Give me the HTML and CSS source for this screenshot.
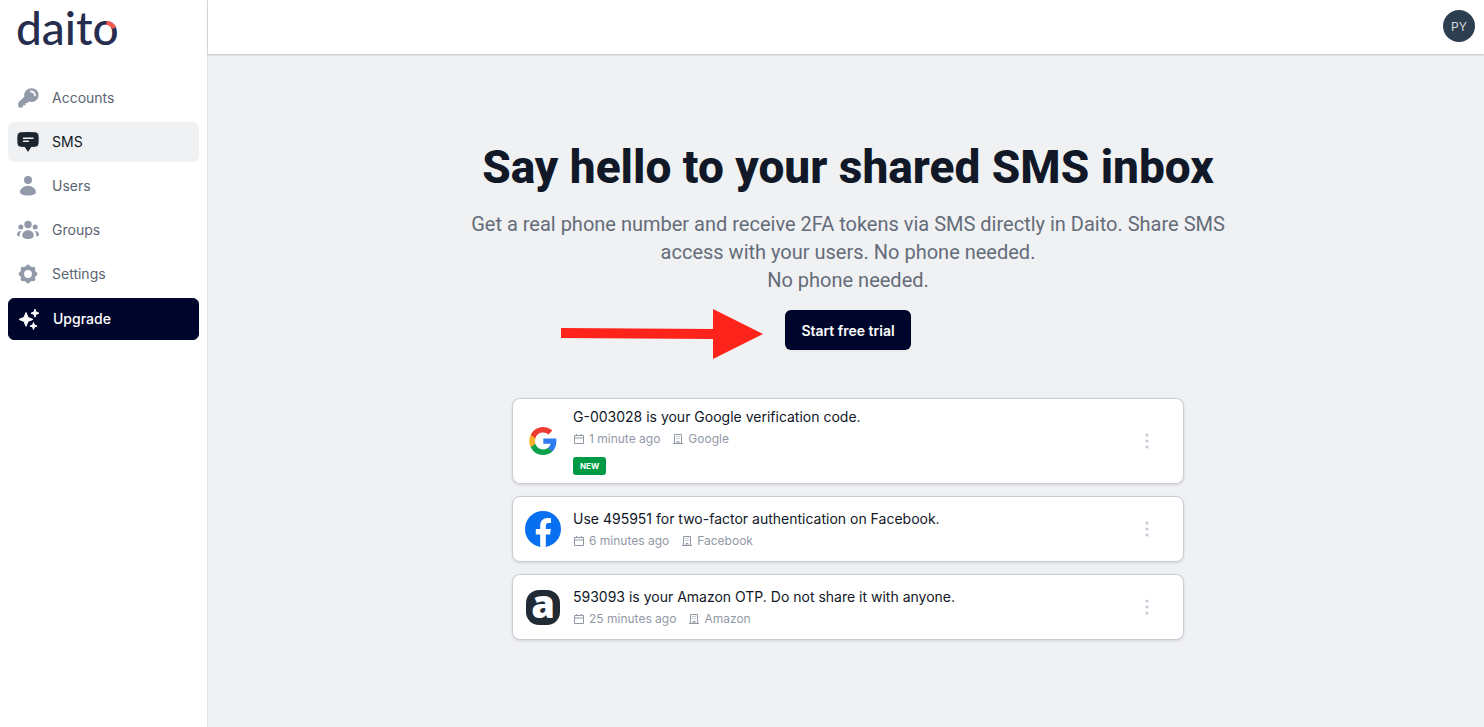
FILE: index.html
```html
<!DOCTYPE html>
<html lang="en">
<head>
    <meta charset="UTF-8">
    <meta name="viewport" content="width=device-width, initial-scale=1.0">
    <title>Daito - SMS</title>
    <link rel="stylesheet" href="styles.css">
</head>
<body>
    <aside class="sidebar">
        <a class="logo" href="#" aria-label="daito">
            <svg width="120" height="56" viewBox="0 0 120 56">
                <text class="logo-text" x="0" y="45">daito</text>
                <path d="M90.500 23a10 10 0 0 1 8 5" fill="none" stroke="#ff5a4f" stroke-width="4"/>
            </svg>
        </a>

        <nav class="nav">
            <a class="nav-item" href="#">
                <svg class="nav-icon" viewBox="0 0 24 24">
                    <path fill="currentColor" d="M15 2.300a6.900 6.900 0 0 0-6.700 8.500L2.900 16a1.600 1.600 0 0 0-.6 1.200v3.600c0 .5.300.800.800.800h3.100c.5 0 .8-.3.800-.8v-1.600h1.800c.5 0 .8-.3.800-.8v-1.500h1.700l2-1.300A6.900 6.900 0 1 0 15 2.300z"/>
                    <path fill="none" stroke="#fff" stroke-width="1.800" stroke-linecap="round" d="M15 5.500a3.900 3.900 0 0 1 3.900 3.900"/>
                </svg>
                Accounts
            </a>
            <a class="nav-item active" href="#">
                <svg class="nav-icon" viewBox="0 0 24 24">
                    <path fill="currentColor" d="M4.500 2.300Q12 1.700 19.500 2.300a3.400 3.400 0 0 1 3 3Q23 9.500 22.500 13.700a3.400 3.400 0 0 1-3 3l-4.300.3-3.200 5-3.200-5-4.300-.3a3.400 3.400 0 0 1-3-3Q1 9.500 1.500 5.300a3.400 3.400 0 0 1 3-3z"/>
                    <path fill="none" stroke="#f0f1f3" stroke-width="1.400" stroke-linecap="round" d="M7.500 8.200h9.500M7.500 11.200h5"/>
                </svg>
                SMS
            </a>
            <a class="nav-item" href="#">
                <svg class="nav-icon" viewBox="0 0 24 24" fill="currentColor">
                    <circle cx="12" cy="6" r="4"/>
                    <path d="M12 11.800c4.300 0 8 3.200 8 6.400 0 1.600-3.200 3.300-8 3.300s-8-1.700-8-3.300c0-3.200 3.700-6.400 8-6.400z"/>
                </svg>
                Users
            </a>
            <a class="nav-item" href="#">
                <svg class="nav-icon" viewBox="0 0 24 24" fill="currentColor">
                    <circle cx="12" cy="6.500" r="3.700"/>
                    <circle cx="4.800" cy="9" r="2.500"/>
                    <circle cx="19.200" cy="9" r="2.500"/>
                    <path d="M12 12.200c3.600 0 5.800 2.700 5.800 5.200 0 2-2.500 3.600-5.800 3.600s-5.800-1.600-5.800-3.600c0-2.500 2.200-5.200 5.800-5.200z"/>
                    <path d="M5.400 13c-1.500 1.500-2 3.500-1.600 5.500C2.300 18.500.900 17.600.900 16.500.900 14.600 3 12.800 5.400 13zM18.600 13c1.500 1.500 2 3.500 1.600 5.500 1.500 0 2.900-.9 2.900-2 0-1.900-2.100-3.700-4.500-3.500z"/>
                </svg>
                Groups
            </a>
            <a class="nav-item" href="#">
                <svg class="nav-icon" viewBox="0 0 24 24">
                    <g fill="currentColor">
                        <circle cx="12" cy="12" r="8"/>
                        <circle cx="12" cy="4.500" r="2"/>
                        <circle cx="17.300" cy="6.700" r="2"/>
                        <circle cx="19.500" cy="12" r="2"/>
                        <circle cx="17.300" cy="17.300" r="2"/>
                        <circle cx="12" cy="19.500" r="2"/>
                        <circle cx="6.700" cy="17.300" r="2"/>
                        <circle cx="4.500" cy="12" r="2"/>
                        <circle cx="6.700" cy="6.700" r="2"/>
                    </g>
                    <circle cx="12" cy="12" r="3.900" fill="#fff"/>
                </svg>
                Settings
            </a>
            <a class="nav-item upgrade" href="#">
                <svg class="nav-icon" viewBox="0 0 24 24" fill="currentColor" stroke="currentColor" stroke-linejoin="round">
                    <path d="M9 5.500l2 4.900 4.900 2-4.900 2-2 4.900-2-4.900-4.900-2 4.900-2z"/>
                    <path d="M18 2.200l1.100 2.900L22 6.200l-2.900 1.100L18 10.200l-1.100-2.900L14 6.200l2.900-1.100z"/>
                    <path d="M16.500 15.500l.9 2.600 2.600.9-2.600.9-.9 2.600-.9-2.600-2.600-.9 2.600-.9z"/>
                </svg>
                Upgrade
            </a>
        </nav>
    </aside>

    <div class="page">
        <header class="topbar">
            <button class="avatar" type="button" aria-label="Account menu">PY</button>
        </header>

        <main class="content">
            <h1>Say hello to your shared SMS inbox</h1>
            <p class="lead">Get a real phone number and receive 2FA tokens via SMS directly in Daito. Share SMS access with your users. No phone needed.<br>No phone needed.</p>

            <div class="cta">
                <svg class="arrow" width="202" height="50" viewBox="0 0 202 50">
                    <path fill="#ff241b" d="M0 19l152 1V0l50 25-50 25V30L0 29z"/>
                </svg>
                <button class="btn" type="button">Start free trial</button>
            </div>

            <ul class="messages">
                <li class="message">
                    <svg class="brand" viewBox="0 0 36 36" aria-hidden="true">
                        <g transform="translate(4 4) scale(.5833)">
                            <path fill="#2f7cf0" d="M47 24.500c0-1.600-.1-3.100-.4-4.600H24.500v9h12.700a11 11 0 0 1-4.700 7.100v6h7.600c4.400-4.100 6.900-10.100 6.900-17.500z"/>
                            <path fill="#0fa04b" d="M24.500 48c6.200 0 11.600-2.100 15.500-5.900l-7.600-6a14.300 14.300 0 0 1-21.500-7.500H3v6.200A23.500 23.500 0 0 0 24.500 48z"/>
                            <path fill="#fbb02d" d="M10.900 28.600a14.200 14.200 0 0 1 0-9.100v-6.200H3a23.800 23.800 0 0 0 0 21.400z"/>
                            <path fill="#ee3a33" d="M24.500 9.500c3.400 0 6.500 1.200 8.900 3.500l6.700-6.800A23.500 23.500 0 0 0 3 13.300l7.900 6.200a14.300 14.300 0 0 1 13.600-10z"/>
                        </g>
                    </svg>
                    <div class="message-body">
                        <p class="message-text">G-003028 is your Google verification code.</p>
                        <div class="meta">
                            <svg class="meta-icon" viewBox="0 0 12 12"><path d="M1.500 2.500h9v8h-9zM1.500 5h9M3.500 1v1.500M8.500 1v1.500"/></svg>
                            <span>1 minute ago</span>
                            <svg class="meta-icon sender" viewBox="0 0 12 12"><path d="M2.500 10.500v-9h7v9M1 10.500h10M5 10.500v-2h2v2M4.500 3.500h1M6.500 3.500h1M4.500 5.500h1M6.500 5.500h1"/></svg>
                            <span>Google</span>
                        </div>
                        <span class="badge">NEW</span>
                    </div>
                    <button class="more" type="button" aria-label="More">
                        <svg width="24" height="24" viewBox="0 0 24 24" fill="currentColor"><circle cx="12" cy="6" r="1.600"/><circle cx="12" cy="12" r="1.600"/><circle cx="12" cy="18" r="1.600"/></svg>
                    </button>
                </li>
                <li class="message">
                    <svg class="brand" viewBox="0 0 36 36" aria-hidden="true">
                        <circle cx="18" cy="18" r="18" fill="#0670f0"/>
                        <path fill="#fff" d="M15.200 35.800V23.500h-4.400v-5.600h4.400v-2.600c0-5.500 2.600-8.400 7.700-8.400 1.200 0 2.300.1 3.100.3v4.900h-2.500c-2 0-2.700 1.100-2.700 3.100v2.700h5.100l-.9 5.600h-4.200v12.300a18 18 0 0 1-5.600 0z"/>
                    </svg>
                    <div class="message-body">
                        <p class="message-text">Use 495951 for two-factor authentication on Facebook.</p>
                        <div class="meta">
                            <svg class="meta-icon" viewBox="0 0 12 12"><path d="M1.500 2.500h9v8h-9zM1.500 5h9M3.500 1v1.500M8.500 1v1.500"/></svg>
                            <span>6 minutes ago</span>
                            <svg class="meta-icon sender" viewBox="0 0 12 12"><path d="M2.500 10.500v-9h7v9M1 10.500h10M5 10.500v-2h2v2M4.500 3.500h1M6.500 3.500h1M4.500 5.500h1M6.500 5.500h1"/></svg>
                            <span>Facebook</span>
                        </div>
                    </div>
                    <button class="more" type="button" aria-label="More">
                        <svg width="24" height="24" viewBox="0 0 24 24" fill="currentColor"><circle cx="12" cy="6" r="1.600"/><circle cx="12" cy="12" r="1.600"/><circle cx="12" cy="18" r="1.600"/></svg>
                    </button>
                </li>
                <li class="message">
                    <svg class="brand" viewBox="0 0 36 36" aria-hidden="true">
                        <rect x="1" y="1" width="34" height="35" rx="13" fill="#212b36"/>
                        <text class="brand-letter" x="18" y="29" text-anchor="middle">a</text>
                    </svg>
                    <div class="message-body">
                        <p class="message-text">593093 is your Amazon OTP. Do not share it with anyone.</p>
                        <div class="meta">
                            <svg class="meta-icon" viewBox="0 0 12 12"><path d="M1.500 2.500h9v8h-9zM1.500 5h9M3.500 1v1.500M8.500 1v1.500"/></svg>
                            <span>25 minutes ago</span>
                            <svg class="meta-icon sender" viewBox="0 0 12 12"><path d="M2.500 10.500v-9h7v9M1 10.500h10M5 10.500v-2h2v2M4.500 3.500h1M6.500 3.500h1M4.500 5.500h1M6.500 5.500h1"/></svg>
                            <span>Amazon</span>
                        </div>
                    </div>
                    <button class="more" type="button" aria-label="More">
                        <svg width="24" height="24" viewBox="0 0 24 24" fill="currentColor"><circle cx="12" cy="6" r="1.600"/><circle cx="12" cy="12" r="1.600"/><circle cx="12" cy="18" r="1.600"/></svg>
                    </button>
                </li>
            </ul>
        </main>
    </div>
</body>
</html>
```
FILE: styles.css
```css
* {
    box-sizing: border-box;
}
body {
    display: flex;
    min-height: 100vh;
    margin: 0;
    font-family: Inter, sans-serif;
    font-size: 14px;
    line-height: 20px;
    color: #111827;
    background: #f0f1f3;
}
h1, p, ul {
    margin: 0;
    padding: 0;
}
button {
    font-family: inherit;
    border: 0;
    cursor: pointer;
}
svg {
    display: block;
    flex-shrink: 0;
    overflow: visible;
}

/* Sidebar */
.sidebar {
    flex: 0 0 208px;
    padding: 0 8px;
    background: #fff;
    border-right: 1px solid #dfe1e4;
}
.logo {
    display: block;
    padding-left: 8px;
    margin-bottom: 22px;
}
.logo-text {
    font-family: Lato, sans-serif;
    font-size: 46px;
    font-weight: 500;
    fill: #272d4e;
}
.nav {
    display: flex;
    flex-direction: column;
    gap: 4px;
}
.nav-item {
    display: flex;
    align-items: center;
    gap: 12px;
    padding: 8px;
    border-radius: 6px;
    color: #5b6472;
    line-height: 24px;
    text-decoration: none;
}
.nav-icon {
    width: 24px;
    height: 24px;
    color: #929aa9;
}
.active {
    color: #111827;
    background: #f0f1f3;
}
.active .nav-icon {
    color: #1c252e;
}
.upgrade {
    border: 1px solid #00062b;
    color: #fff;
    background: #00062b;
    font-weight: 500;
}
.upgrade .nav-icon {
    color: #fff;
}

/* Main column */
.page {
    flex: 1;
    min-width: 0;
}
.topbar {
    display: flex;
    justify-content: flex-end;
    padding: 10px 9px 12px;
    background: #fff;
    box-shadow: 0 1px 2px rgba(0, 0, 0, 0.2);
}
.avatar {
    width: 32px;
    height: 32px;
    padding: 0;
    border-radius: 50%;
    color: #d5dade;
    background: #2c3e50;
    font-size: 12px;
}
.content {
    display: flex;
    flex-direction: column;
    align-items: center;
    padding: 89px 16px 40px 20px;
    text-align: center;
}
h1 {
    font-family: Roboto, sans-serif;
    font-size: 46px;
    line-height: 48px;
    font-weight: 800;
}
.lead {
    max-width: 768px;
    margin-top: 19px;
    color: #646c7a;
    font-family: Roboto, sans-serif;
    font-size: 20px;
    line-height: 28px;
}
.cta {
    position: relative;
    margin-top: 16px;
}
.arrow {
    position: absolute;
    top: -1px;
    right: calc(100% + 22px);
}
.btn {
    height: 40px;
    padding: 0 16px;
    border-radius: 6px;
    color: #fff;
    background: #00062b;
    font-size: 14px;
    font-weight: 600;
    box-shadow: 0 1px 2px rgba(0, 0, 0, 0.05);
}

/* Messages */
.messages {
    display: flex;
    flex-direction: column;
    gap: 12px;
    width: 100%;
    max-width: 672px;
    margin-top: 48px;
    list-style: none;
    text-align: left;
}
.message {
    display: flex;
    align-items: center;
    gap: 12px;
    min-height: 66px;
    padding: 8px 24px 8px 12px;
    background: #fff;
    border: 1px solid #c9ced6;
    border-radius: 8px;
    box-shadow: 0 1px 3px rgba(0, 0, 0, 0.12);
}
.brand {
    width: 36px;
    height: 36px;
}
.brand-letter {
    font-family: "Open Sans", sans-serif;
    font-size: 38px;
    font-weight: 800;
    fill: #fff;
}
.message-body {
    flex: 1;
}
.meta {
    display: flex;
    align-items: center;
    gap: 4px;
    margin-top: 4px;
    color: #9299a6;
    font-size: 12px;
    line-height: 16px;
}
.meta-icon {
    width: 12px;
    height: 12px;
    fill: none;
    stroke: currentColor;
}
.sender {
    margin-left: 8px;
}
.badge {
    display: block;
    width: fit-content;
    margin-top: 10px;
    padding: 0 7px;
    border-radius: 3px;
    color: #fff;
    background: #009a44;
    font-size: 8px;
    line-height: 18px;
    font-weight: 700;
}
.more {
    padding: 0;
    color: #c9ced6;
    background: none;
}
.more svg {
    width: 24px;
    height: 24px;
}
```
